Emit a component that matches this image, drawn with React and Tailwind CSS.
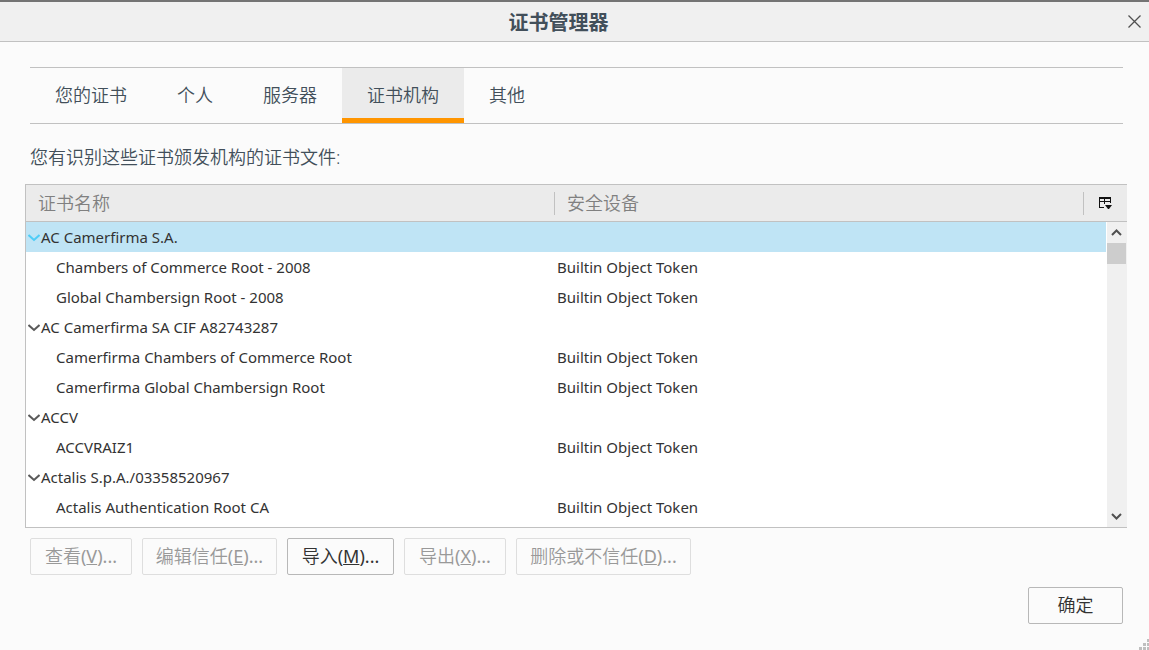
import { useState } from 'react';

const TABS = ['您的证书', '个人', '服务器', '证书机构', '其他'];

const ROWS = [
  { name: 'AC Camerfirma S.A.', group: true },
  { name: 'Chambers of Commerce Root - 2008', device: 'Builtin Object Token' },
  { name: 'Global Chambersign Root - 2008', device: 'Builtin Object Token' },
  { name: 'AC Camerfirma SA CIF A82743287', group: true },
  { name: 'Camerfirma Chambers of Commerce Root', device: 'Builtin Object Token' },
  { name: 'Camerfirma Global Chambersign Root', device: 'Builtin Object Token' },
  { name: 'ACCV', group: true },
  { name: 'ACCVRAIZ1', device: 'Builtin Object Token' },
  { name: 'Actalis S.p.A./03358520967', group: true },
  { name: 'Actalis Authentication Root CA', device: 'Builtin Object Token' },
];

const ACTIONS = [
  { label: '查看', accessKey: 'V', disabled: true, width: 'w-[102px]' },
  { label: '编辑信任', accessKey: 'E', disabled: true, width: 'w-[135px]' },
  { label: '导入', accessKey: 'M', disabled: false, width: 'w-[107px]' },
  { label: '导出', accessKey: 'X', disabled: true, width: 'w-[102px]' },
  { label: '删除或不信任', accessKey: 'D', disabled: true, width: 'w-[175px]' },
];

function Twisty({ selected }) {
  return (
    <svg
      className={`h-3 w-3 shrink-0 ${selected ? 'text-[#4fcdf7]' : 'text-[#5a5a5a]'}`}
      viewBox="0 0 12 12"
      fill="none"
      stroke="currentColor"
      strokeWidth="2"
    >
      <path d="M0.5 3 6 8 11.5 3" />
    </svg>
  );
}

function ColumnPickerIcon() {
  return (
    <svg className="h-[13px] w-[13px]" viewBox="0 0 13 13" fill="#111">
      <path d="M0 0h12v2H0zM0 0h1v11H0zM11 0h1v6h-1zM5 1h1v6H5zM1 4h10v1H1zM0 10h5v1H0z" />
      <path d="M6 8h7L10 12H9z" />
    </svg>
  );
}

function Scrollbar() {
  return (
    <div className="absolute top-[37px] right-0 bottom-0 flex w-[21px] flex-col border-l border-white bg-[#f0f0f0]">
      <button aria-label="向上滚动" className="flex h-[21px] items-center justify-center pr-px">
        <svg className="h-[11px] w-[11px]" viewBox="0 0 11 11" fill="none" stroke="#505050" strokeWidth="2">
          <path d="M1 8 5.500 3.500 10 8" />
        </svg>
      </button>
      <div className="mr-px h-[21px] bg-[#cdcdcd]" />
      <button aria-label="向下滚动" className="mt-auto flex h-[21px] items-center justify-center pr-px">
        <svg className="h-[11px] w-[11px]" viewBox="0 0 11 11" fill="none" stroke="#505050" strokeWidth="2">
          <path d="M1 3 5.500 7.500 10 3" />
        </svg>
      </button>
    </div>
  );
}

export default function App() {
  const [tab, setTab] = useState(3);
  const [selected, setSelected] = useState(0);

  return (
    <div className="relative flex min-h-screen flex-col border-t-2 border-[#747474] bg-[#fbfbfb] font-['Noto_Sans','Noto_Sans_CJK_SC',sans-serif] text-lg font-[350] text-[#424f5a]">
      <header className="flex h-10 items-center border-b border-[#c1c1c1] bg-[#f0f0f0]">
        <h1 className="flex-1 pt-0.5 text-center text-xl font-bold">证书管理器</h1>
        <button aria-label="关闭" className="flex w-8 items-center justify-center pl-0.5">
          <svg className="h-[13px] w-[13px]" viewBox="0 0 13 13" fill="none" stroke="#505050" strokeWidth="1.3">
            <path d="M0.5 0.5 12.5 12.5M12.5 0.5 0.5 12.5" />
          </svg>
        </button>
      </header>

      <main className="pt-[25px] pr-[22px] pb-6 pl-[25px]">
        <div role="tablist" className="mr-1 ml-[5px] flex h-[57px] border-y border-[#c1c1c1]">
          {TABS.map((label, i) => (
            <button
              key={label}
              role="tab"
              aria-selected={tab === i}
              onClick={() => setTab(i)}
              className={`border-b-[5px] px-[25px] pt-[3px] ${
                tab === i ? 'border-[#ff9500] bg-[#ebebeb]' : 'border-transparent'
              }`}
            >
              {label}
            </button>
          ))}
        </div>

        <p className="mt-[19px] ml-[5px] leading-7">您有识别这些证书颁发机构的证书文件:</p>

        <div className="relative mt-[13px] border-y border-l border-[#c1c1c1] bg-white pb-[5px]">
          <table className="w-full table-fixed border-collapse text-left">
            <thead>
              <tr className="h-[37px] bg-[#ebebeb] text-[#808080] shadow-[inset_0_-1px_0_#c1c1c1]">
                <th className="p-0 font-[350]">
                  <div className="flex h-[23px] items-center border-r border-[#c1c1c1] pb-0.5 pl-3">证书名称</div>
                </th>
                <th className="p-0 font-[350]">
                  <div className="flex h-[23px] items-center border-r border-[#c1c1c1] pb-0.5 pl-3">安全设备</div>
                </th>
                <th className="w-[43px] p-0">
                  <button aria-label="选择要显示的列" className="flex w-full items-center justify-center">
                    <ColumnPickerIcon />
                  </button>
                </th>
              </tr>
            </thead>
            <tbody className="text-[15px] font-normal text-[#333]">
              {ROWS.map((row, i) => (
                <tr
                  key={row.name}
                  onClick={() => setSelected(i)}
                  className={`h-[30px] ${selected === i ? 'bg-[#bfe4f5]' : ''}`}
                >
                  <td className={`p-0 pt-0.5 ${row.group ? 'pl-[2px]' : 'pl-[30px]'}`}>
                    <div className="flex items-center gap-px whitespace-nowrap">
                      {row.group && <Twisty selected={selected === i} />}
                      {row.name}
                    </div>
                  </td>
                  <td className="p-0 pt-0.5 pl-[2px]">{row.device}</td>
                  <td className="p-0" />
                </tr>
              ))}
            </tbody>
          </table>
          <Scrollbar />
        </div>

        <div className="mt-[10px] ml-[5px] flex gap-[10px]">
          {ACTIONS.map((action) => (
            <button
              key={action.accessKey}
              disabled={action.disabled}
              className={`h-[37px] rounded-xs border pb-0.5 whitespace-nowrap ${action.width} ${
                action.disabled ? 'border-[#dedede] text-[#999]' : 'border-[#b8b8b8] text-[#333]'
              }`}
            >
              {action.label}
              <span className="font-normal">
                (<u>{action.accessKey}</u>)...
              </span>
            </button>
          ))}
        </div>

        <div className="mt-3 mr-1 flex justify-end">
          <button className="h-[37px] w-[95px] rounded-xs border border-[#b8b8b8] pb-0.5 text-[#333]">确定</button>
        </div>
      </main>

      <svg className="absolute right-0 bottom-0 h-[11px] w-[10px]" viewBox="0 0 10 11" fill="#bfbfbf">
        <path d="M8 0h3v3H8zM4 4h3v3H4zM8 4h3v3H8zM0 8h3v3H0zM4 8h3v3H4zM8 8h3v3H8z" />
      </svg>
    </div>
  );
}
